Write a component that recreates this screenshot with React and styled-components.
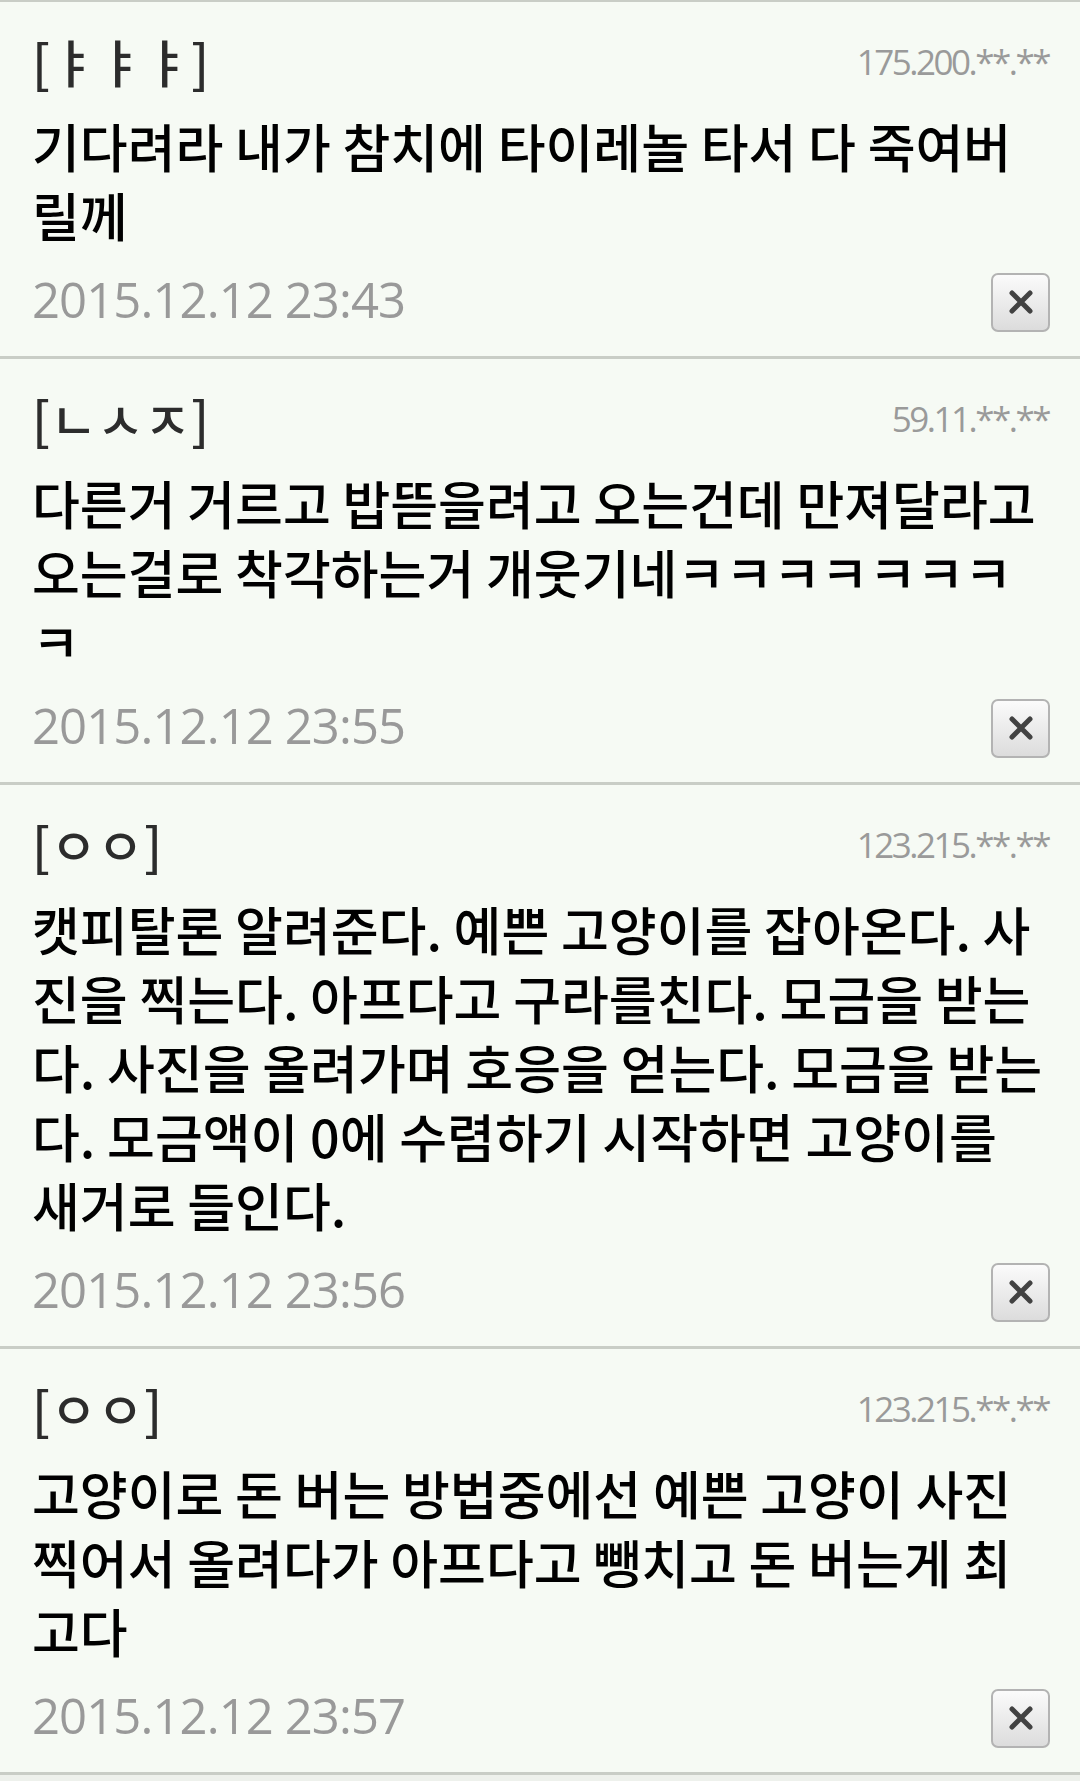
import React from 'react'
import styled, { createGlobalStyle } from 'styled-components'

const GlobalStyle = createGlobalStyle`
   html, body {
      margin: 0;
      padding: 0;
      background: #eef1ec;
   }
   body {
      font-family: "Noto Sans CJK KR", "Noto Sans", sans-serif;
   }
`

// 댓글 목록 데이터
const comments = [
   {
      name: '[ㅑㅑㅑ]',
      ip: '175.200.**.**',
      text: '기다려라 내가 참치에 타이레놀 타서 다 죽여버릴께',
      date: '2015.12.12 23:43',
   },
   {
      name: '[ㄴㅅㅈ]',
      ip: '59.11.**.**',
      text: '다른거 거르고 밥뜯을려고 오는건데 만져달라고 오는걸로 착각하는거 개웃기네ㅋㅋㅋㅋㅋㅋㅋㅋ',
      date: '2015.12.12 23:55',
   },
   {
      name: '[ㅇㅇ]',
      ip: '123.215.**.**',
      text: '캣피탈론 알려준다. 예쁜 고양이를 잡아온다. 사진을 찍는다. 아프다고 구라를친다. 모금을 받는다. 사진을 올려가며 호응을 얻는다. 모금을 받는다. 모금액이 0에 수렴하기 시작하면 고양이를 새거로 들인다.',
      date: '2015.12.12 23:56',
   },
   {
      name: '[ㅇㅇ]',
      ip: '123.215.**.**',
      text: '고양이로 돈 버는 방법중에선 예쁜 고양이 사진 찍어서 올려다가 아프다고 뺑치고 돈 버는게 최고다',
      date: '2015.12.12 23:57',
   },
]

const CloseIcon = () => (
   <svg width="24" height="24" viewBox="0 0 24 24">
      <path d="M3 3 L21 21 M21 3 L3 21" stroke="#424242" strokeWidth="5" strokeLinecap="round" fill="none" />
   </svg>
)

export default function App() {
   return (
      <>
         <GlobalStyle />
         <CommentList>
            {comments.map((c, idx) => (
               <Comment key={idx}>
                  <Header>
                     <Name>{c.name}</Name>
                     <Ip>{c.ip}</Ip>
                  </Header>
                  <Body>{c.text}</Body>
                  <Footer>
                     <Date>{c.date}</Date>
                     <DeleteButton type="button" aria-label="삭제">
                        <CloseIcon />
                     </DeleteButton>
                  </Footer>
               </Comment>
            ))}
         </CommentList>
      </>
   )
}

const CommentList = styled.ul`
   list-style: none;
   margin: 0;
   padding: 0;
   background: #f6faf4;
   border-top: 2px solid #c9cdc6;
`

const Comment = styled.li`
   display: flex;
   flex-direction: column;
   padding: 24px 30px 25px 32px;
   border-bottom: 3px solid #c9cdc6;
`

const Header = styled.div`
   height: 70px;
   display: flex;
   align-items: center;
   justify-content: space-between;
`

const Name = styled.span`
   font-size: 51px;
   font-weight: 500;
   color: #2c2c2c;
   line-height: 70px;
`

const Ip = styled.span`
   font-family: "Open Sans", "Noto Sans", sans-serif;
   font-size: 35px;
   letter-spacing: -2.5px;
   color: #9a9a9a;
   margin-right: 1px;
`

const Body = styled.p`
   margin: 15px 0 0;
   font-size: 52px;
   font-weight: 500;
   line-height: 69px;
   color: #000;
`

const Footer = styled.div`
   margin-top: 24px;
   height: 58px;
   display: flex;
   align-items: center;
   justify-content: space-between;
`

const Date = styled.span`
   font-family: "Open Sans", "Noto Sans", sans-serif;
   font-size: 49px;
   letter-spacing: -0.9px;
   color: #999;
   margin-top: -6px;
`

const DeleteButton = styled.button`
   width: 59px;
   height: 59px;
   padding: 0;
   display: flex;
   align-items: center;
   justify-content: center;
   border: 2px solid #b3b3b3;
   border-radius: 7px;
   background: linear-gradient(#fbfbfb, #dcdcdc);
   cursor: pointer;
`
